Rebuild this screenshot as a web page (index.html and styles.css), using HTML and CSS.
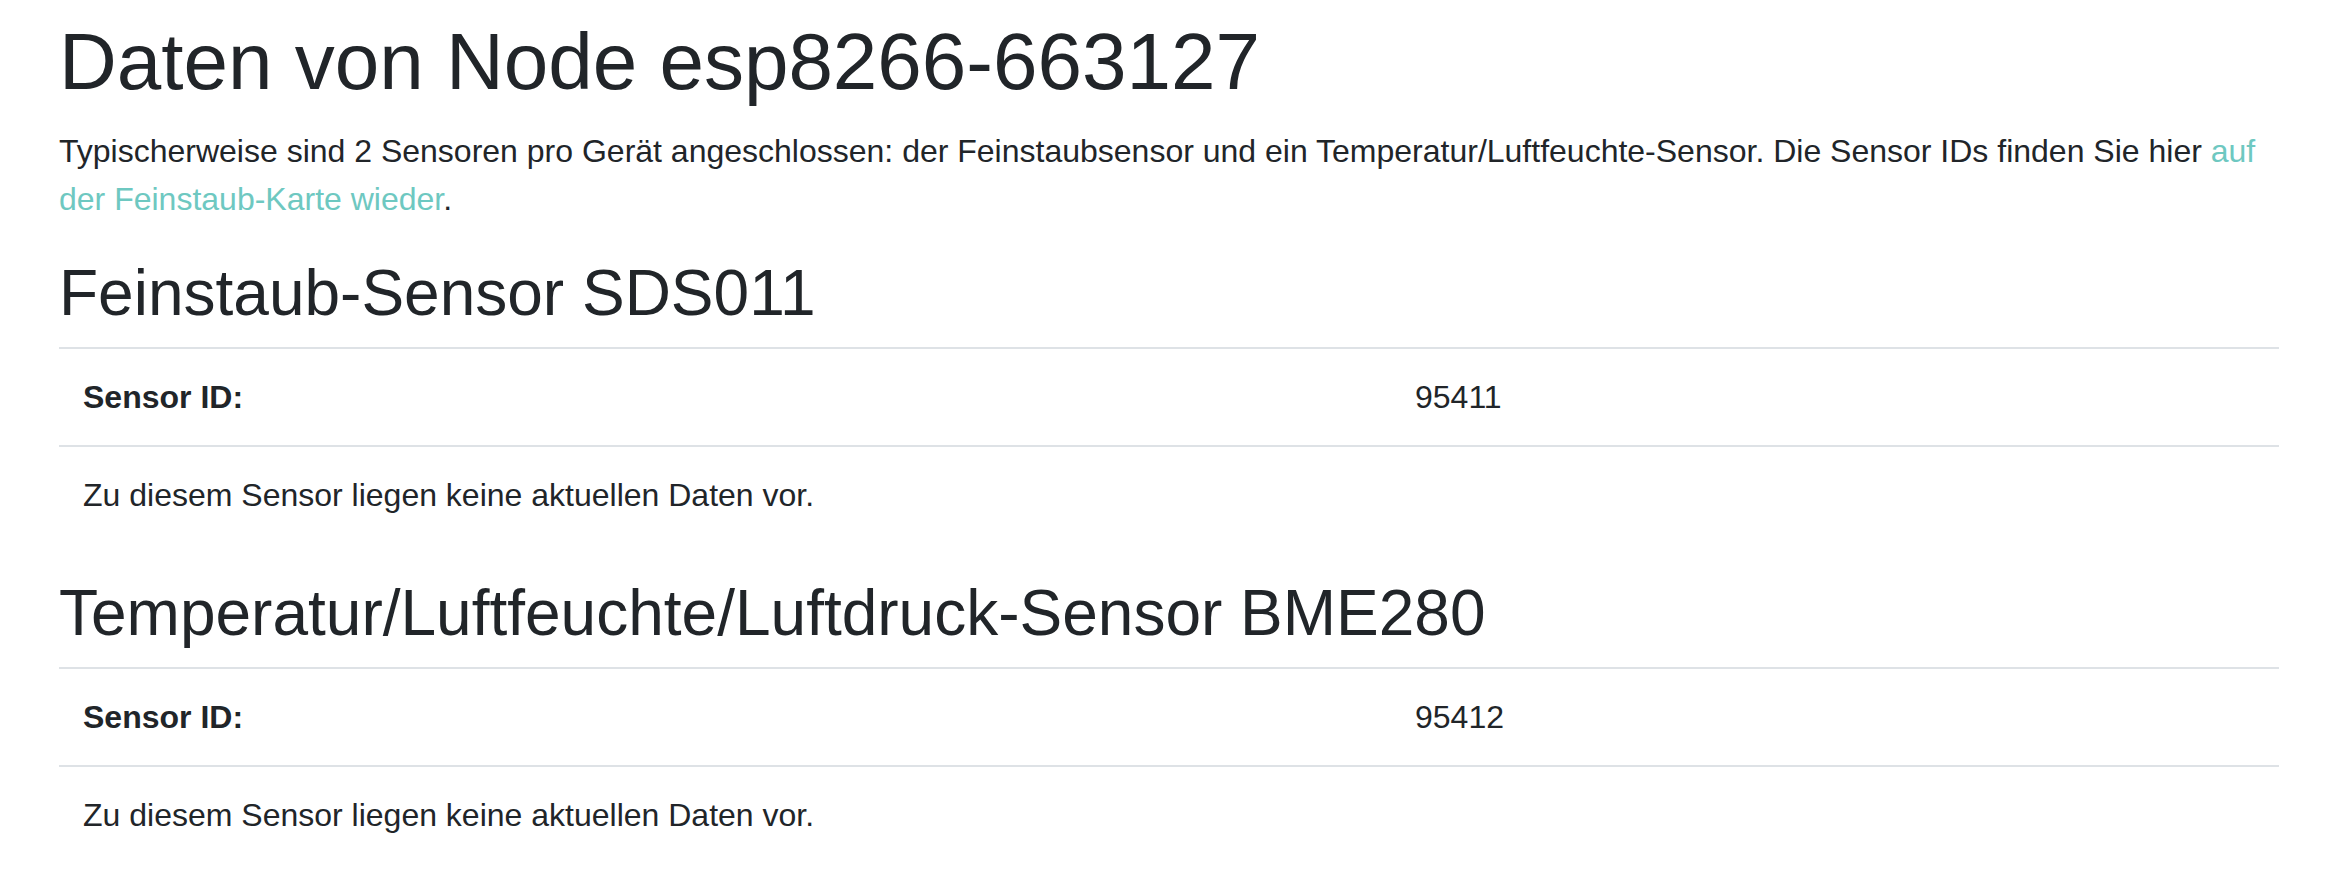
FILE: index.html
```html
<!DOCTYPE html>
<html lang="de">
<head>
  <meta charset="UTF-8">
  <meta name="viewport" content="width=device-width, initial-scale=1.0">
  <title>Daten von Node esp8266-663127</title>
  <link rel="stylesheet" href="styles.css">
</head>
<body>
  <div class="container">
    <h1>Daten von Node esp8266-663127</h1>
    <p>Typischerweise sind 2 Sensoren pro Gerät angeschlossen: der Feinstaubsensor und ein Temperatur/Luftfeuchte-Sensor. Die Sensor IDs finden Sie hier <a href="#">auf der Feinstaub-Karte wieder</a>.</p>

    <h2>Feinstaub-Sensor SDS011</h2>
    <table class="sensor">
      <tbody>
        <tr>
          <th>Sensor ID:</th>
          <td>95411</td>
        </tr>
        <tr>
          <td colspan="2">Zu diesem Sensor liegen keine aktuellen Daten vor.</td>
        </tr>
      </tbody>
    </table>

    <h2>Temperatur/Luftfeuchte/Luftdruck-Sensor BME280</h2>
    <table class="sensor">
      <tbody>
        <tr>
          <th>Sensor ID:</th>
          <td>95412</td>
        </tr>
        <tr>
          <td colspan="2">Zu diesem Sensor liegen keine aktuellen Daten vor.</td>
        </tr>
      </tbody>
    </table>
  </div>
</body>
</html>
```

FILE: styles.css
```css
body {
  font-family: 'Liberation Sans', Arial, sans-serif;
  font-size: 32px;
  line-height: 1.5;
  color: #212529;
  background: white;
  margin: 0;
}

.container {
  padding: 0 53px 0 59px;
}

h1 {
  font-size: 80px;
  font-weight: 400;
  line-height: 1.2;
  margin: 14px 0 17px;
}

h2 {
  font-size: 64px;
  font-weight: 400;
  line-height: 1.2;
  margin: 0 0 15px;
}

p {
  margin: 0 0 32px;
}

a {
  color: #6ec8c1;
  text-decoration: none;
}

.sensor {
  width: 100%;
  border-collapse: collapse;
  margin-bottom: 32px;
}

.sensor th,
.sensor td {
  padding: 24px;
  border-top: 2px solid #dee2e6;
  text-align: left;
  vertical-align: top;
}

.sensor th {
  width: 60%;
  font-weight: 700;
}
```
